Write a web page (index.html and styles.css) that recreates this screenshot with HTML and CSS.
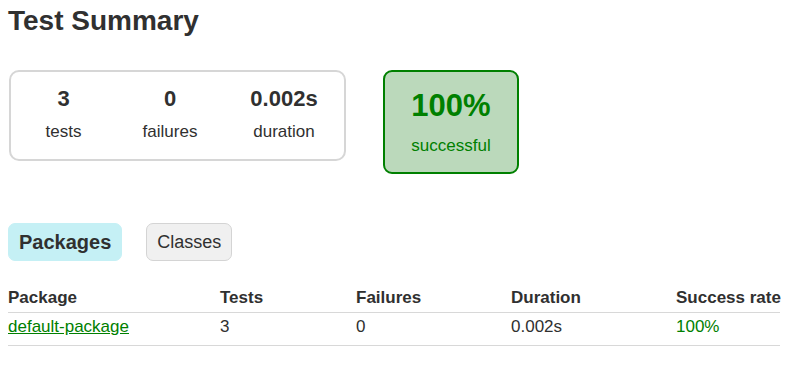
FILE: index.html
```html
<!DOCTYPE html>
<html lang="en">
<head>
<meta charset="utf-8">
<title>Test Summary</title>
<link rel="stylesheet" href="styles.css">
</head>
<body>
<div class="content">
  <h1 class="title">Test Summary</h1>
  <div class="summary">
    <div class="counters">
      <div class="info info-tests">
        <div class="counter">3</div>
        <p class="label">tests</p>
      </div>
      <div class="info info-failures">
        <div class="counter">0</div>
        <p class="label">failures</p>
      </div>
      <div class="info info-duration">
        <div class="counter">0.002s</div>
        <p class="label">duration</p>
      </div>
    </div>
    <div class="rate">
      <div class="percent">100%</div>
      <p class="label">successful</p>
    </div>
  </div>
  <ul class="tabs">
    <li class="tab selected">Packages</li>
    <li class="tab">Classes</li>
  </ul>
  <table class="results">
    <colgroup>
      <col class="c-package">
      <col class="c-tests">
      <col class="c-failures">
      <col class="c-duration">
      <col class="c-rate">
    </colgroup>
    <thead>
      <tr>
        <th>Package</th>
        <th>Tests</th>
        <th>Failures</th>
        <th>Duration</th>
        <th>Success rate</th>
      </tr>
    </thead>
    <tbody>
      <tr>
        <td><a class="pkg-link" href="#">default-package</a></td>
        <td>3</td>
        <td>0</td>
        <td>0.002s</td>
        <td class="success">100%</td>
      </tr>
    </tbody>
  </table>
</div>
</body>
</html>
```
FILE: styles.css
```css
html, body {
  margin: 0;
  padding: 0;
  background: #ffffff;
}

body {
  font-family: "Liberation Sans", Arial, sans-serif;
  font-size: 17px;
  color: #303030;
}

.content {
  padding: 0 8px;
}

.title {
  margin: 4px 0 0 0;
  font-size: 28px;
  line-height: 33px;
  font-weight: bold;
  color: #303030;
}

.summary {
  display: flex;
  align-items: flex-start;
  margin-top: 33px;
}

.counters {
  display: flex;
  margin-left: 1px;
  border: 2px solid #d6d6d6;
  border-radius: 10px;
  box-sizing: border-box;
  width: 337px;
}

.info {
  text-align: center;
  padding: 15px 0 17px 0;
}

.info-tests { width: 105px; }
.info-failures { width: 108px; }
.info-duration { width: 120px; }

.counter {
  font-size: 22px;
  line-height: 24px;
  font-weight: bold;
}

.label {
  margin: 11px 0 0 0;
  font-size: 17px;
  line-height: 20px;
}

.rate {
  margin-left: 37px;
  width: 136px;
  box-sizing: border-box;
  border: 2px solid #008000;
  border-radius: 9px;
  background: #bbd9bb;
  color: #008000;
  text-align: center;
  padding: 16px 0 16px 0;
}

.percent {
  font-size: 31px;
  line-height: 36px;
  font-weight: bold;
}

.rate .label {
  margin-top: 12px;
}

.tabs {
  list-style: none;
  display: flex;
  gap: 24px;
  margin: 49px 0 0 0;
  padding: 0;
}

.tab {
  padding: 5px 10px;
  font-size: 18px;
  line-height: 26px;
  border: 1px solid #d4d4d4;
  border-radius: 7px;
  background: #f0f0f0;
  color: #303030;
}

.tab.selected {
  font-size: 20px;
  font-weight: bold;
  background: #c5f0f5;
  border-color: #c5f0f5;
}

.results {
  margin-top: 27px;
  width: 772px;
  border-collapse: collapse;
  table-layout: fixed;
}

.c-package { width: 212px; }
.c-tests { width: 136px; }
.c-failures { width: 155px; }
.c-duration { width: 165px; }

.results th,
.results td {
  text-align: left;
  padding: 0;
  font-size: 17px;
  line-height: 20px;
  white-space: nowrap;
}

.results th {
  font-weight: bold;
  padding-bottom: 4px;
  border-bottom: 1px solid #d8d8d8;
}

.results td {
  padding-top: 4px;
  padding-bottom: 8px;
  border-bottom: 1px solid #d8d8d8;
}

.pkg-link {
  color: #008000;
  text-decoration: underline;
}

.success {
  color: #008000;
}
```
